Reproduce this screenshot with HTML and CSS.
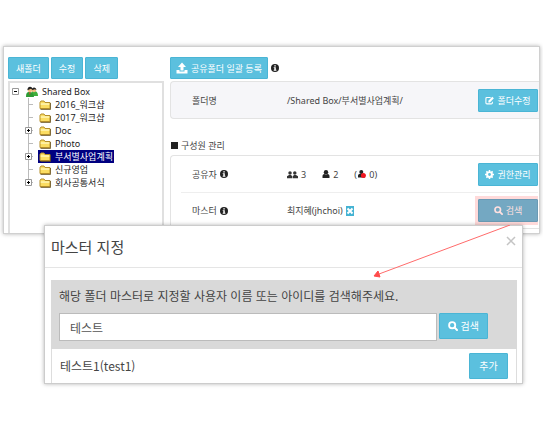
FILE: index.html
```html
<!DOCTYPE html>
<html lang="ko">
<head>
    <meta charset="utf-8">
    <title>Shared Box</title>
    <link rel="stylesheet" href="styles.css">
</head>
<body>
    <!-- Icons -->
    <svg class="defs" width="0" height="0" aria-hidden="true">
        <symbol id="folder" viewBox="0 0 12 12">
            <path d="M1 9.500V3.500L2 2h3l1 1.500h5v6z" fill="#fbdd62" stroke="#b48e2a"/>
            <path d="M1.700 4.300h8.600v1.500H1.700z" fill="#fff6b5"/>
            <path d="M1.500 10.500h10V4" fill="none" stroke="#6b5420" stroke-width=".8"/>
        </symbol>
        <symbol id="people" viewBox="0 0 12 12">
            <path d="M5 10c0-4 1-5 3-5s4 1 4 5z" fill="#3fae3a"/>
            <circle cx="8" cy="4.200" r="2" fill="#f2bd80"/>
            <path d="M5.700 4.200c0-3.600 4.700-3.600 4.700 0L9 3.200z" fill="#222"/>
            <path d="M0 11c0-4 1-5 3.500-5S8 8 8 11z" fill="#2d9b33"/>
            <path d="M3 6.500h1.600l-.8 2.500z" fill="#e33"/>
            <circle cx="4" cy="4" r="2.300" fill="#f2bd80"/>
            <path d="M1.400 4.300c0-4.600 5.300-4.600 5.300 0L5 2.800z" fill="#222"/>
        </symbol>
        <symbol id="plus" viewBox="0 0 7 7">
            <path d="M.5 .5h6v6h-6z" fill="#fff" stroke="#999"/>
            <path d="M2 3.500h3M3.500 2v3" stroke="#000"/>
        </symbol>
        <symbol id="minus" viewBox="0 0 7 7">
            <path d="M.5 .5h6v6h-6z" fill="#fff" stroke="#999"/>
            <path d="M2 3.500h3" stroke="#000"/>
        </symbol>
        <symbol id="upload" viewBox="0 0 12 12">
            <path d="M6 .5 10 5H7.500v3.500h-3V5H2zM.5 8h3v1.500h5V8h3v3.500H.5z" fill="currentColor"/>
        </symbol>
        <symbol id="info" viewBox="0 0 8 8">
            <circle cx="4" cy="4" r="4" fill="#222"/>
            <path d="M3.300 1.200h1.500v1.300H3.300zM2.700 3.200h2.100v2.600h.6v.9H2.700v-.9h.6V4.100h-.6z" fill="#fff"/>
        </symbol>
        <symbol id="edit" viewBox="0 0 12 12">
            <path d="M7.500 2H2.500Q1.200 2 1.200 3.300v6Q1.200 10.500 2.500 10.500h6q1.300 0 1.300-1.200V7.500" fill="none" stroke="currentColor" stroke-width="1.400"/>
            <path d="M4.500 8.500V6.300L9.700 1l2.100 2.100-5.200 5.400z" fill="currentColor"/>
        </symbol>
        <symbol id="gear" viewBox="0 0 12 12">
            <circle cx="6" cy="6" r="3.200" fill="none" stroke="currentColor" stroke-width="2.600"/>
            <path d="M6 0v3M6 9v3M0 6h3M9 6h3M1.800 1.800l2 2M8.200 8.200l2 2M1.800 10.200l2-2M8.200 3.800l2-2" stroke="currentColor" stroke-width="2"/>
        </symbol>
        <symbol id="search" viewBox="0 0 12 12">
            <circle cx="5" cy="5" r="3.700" fill="none" stroke="currentColor" stroke-width="2.200"/>
            <path d="M7.700 7.700 10.800 10.800" stroke="currentColor" stroke-width="2.400" stroke-linecap="round"/>
        </symbol>
        <symbol id="group" viewBox="0 0 12 9">
            <circle cx="3.300" cy="2.800" r="1.900" fill="#333"/>
            <circle cx="8.500" cy="2.800" r="1.900" fill="#333"/>
            <path d="M0 8.500V6.500L2.200 5h2.200L5.700 6.500v2zM6.300 8.500v-2L7.600 5h2.200L12 6.500v2z" fill="#333"/>
        </symbol>
        <symbol id="user" viewBox="0 0 8 8">
            <circle cx="4" cy="2.200" r="2.200" fill="#222"/>
            <path d="M.5 8V5.800Q.7 4.300 2.400 4q1.600 1 3.200 0 1.700.3 1.900 1.800V8z" fill="#222"/>
        </symbol>
        <symbol id="blocked" viewBox="0 0 8 8">
            <circle cx="3.300" cy="2" r="2" fill="#222"/>
            <path d="M0 7.500V5.500Q.2 4 2 3.800h3L7 5.500v2z" fill="#222"/>
            <circle cx="5.400" cy="5.500" r="2.500" fill="#f0141e"/>
        </symbol>
    </svg>

    <div class="scene">
        <div class="panel">
            <div class="side">
                <div class="toolbar">
                    <button class="btn">새폴더</button>
                    <button class="btn">수정</button>
                    <button class="btn">삭제</button>
                </div>
                <div class="tree">
                    <div class="root">
                        <svg class="toggle"><use href="#minus"/></svg>
                        <svg class="icon"><use href="#people"/></svg>
                        <span>Shared Box</span>
                    </div>
                    <ul class="nodes">
                        <li class="node"><i class="toggle"></i><svg class="icon"><use href="#folder"/></svg><span>2016_워크샵</span></li>
                        <li class="node"><i class="toggle"></i><svg class="icon"><use href="#folder"/></svg><span>2017_워크샵</span></li>
                        <li class="node"><svg class="toggle"><use href="#plus"/></svg><svg class="icon"><use href="#folder"/></svg><span>Doc</span></li>
                        <li class="node"><i class="toggle"></i><svg class="icon"><use href="#folder"/></svg><span>Photo</span></li>
                        <li class="node"><svg class="toggle"><use href="#plus"/></svg><div class="selected"><svg class="icon"><use href="#folder"/></svg><span>부서별사업계획</span></div></li>
                        <li class="node"><i class="toggle"></i><svg class="icon"><use href="#folder"/></svg><span>신규영업</span></li>
                        <li class="node"><svg class="toggle"><use href="#plus"/></svg><svg class="icon"><use href="#folder"/></svg><span>회사공통서식</span></li>
                    </ul>
                </div>
            </div>

            <div class="content">
                <div class="toolbar upload">
                    <button class="btn"><svg class="icon"><use href="#upload"/></svg>공유폴더 일괄 등록</button>
                    <svg class="info"><use href="#info"/></svg>
                </div>
                <div class="card gray">
                    <div class="row">
                        <div class="name">폴더명</div>
                        <div class="value">/Shared Box/부서별사업계획/</div>
                        <button class="btn wide"><svg class="small"><use href="#edit"/></svg>폴더수정</button>
                    </div>
                </div>
                <div class="heading"><i class="square"></i>구성원 관리</div>
                <div class="card">
                    <div class="row">
                        <div class="name">공유자 <svg class="info"><use href="#info"/></svg></div>
                        <div class="value counts">
                            <span class="count"><svg class="group"><use href="#group"/></svg>3</span>
                            <span class="count"><svg class="info"><use href="#user"/></svg>2</span>
                            <span class="count">(<svg class="info"><use href="#blocked"/></svg>&nbsp;0)</span>
                        </div>
                        <button class="btn wide"><svg class="small"><use href="#gear"/></svg>권한관리</button>
                    </div>
                    <div class="row">
                        <div class="name">마스터 <svg class="info"><use href="#info"/></svg></div>
                        <div class="value">최지혜(jhchoi)
                            <button class="remove" aria-label="삭제"><svg viewBox="0 0 8 8"><path d="M1.500 1.500l5 5M6.500 1.500l-5 5" stroke="#fff" stroke-width="2"/></svg></button>
                        </div>
                        <div class="mark"><button class="btn wide"><svg class="small"><use href="#search"/></svg>검색</button></div>
                    </div>
                </div>
            </div>
        </div>

        <div class="modal">
            <div class="modal-head">
                <div class="title">마스터 지정</div>
                <button class="close" aria-label="닫기"><svg viewBox="0 0 10 10"><path d="M1 1l8 8M9 1l-8 8" stroke="#c4c4c4" stroke-width="1.500"/></svg></button>
            </div>
            <div class="modal-body">
                <div class="search">
                    <label for="keyword">해당 폴더 마스터로 지정할 사용자 이름 또는 아이디를 검색해주세요.</label>
                    <div class="search-row">
                        <input type="text" id="keyword" value="테스트">
                        <button class="btn large"><svg class="icon"><use href="#search"/></svg>검색</button>
                    </div>
                </div>
                <div class="result">
                    <span>테스트1(test1)</span>
                    <button class="btn large add">추가</button>
                </div>
            </div>
        </div>

        <svg class="arrow" viewBox="0 0 138 54">
            <path d="M137 0 6 49" stroke="#ff6b6b"/>
            <path d="M1 51 5 46 7 52z" fill="#ff4b4b" stroke="#ff4b4b"/>
        </svg>
    </div>
</body>
</html>
```

FILE: styles.css
```css
* {
    box-sizing: border-box;
}
body {
    min-height: 100vh;
    margin: 0;
    padding: 46px 3px;
    background: #fff;
    color: #444;
    font-family: "Noto Sans", "Noto Sans CJK KR", sans-serif;
    font-size: 9px;
    line-height: 13px;
}
.defs {
    position: absolute;
}
svg {
    display: block;
    flex: none;
}
.scene {
    position: relative;
}

/* Buttons */
.btn {
    display: flex;
    align-items: center;
    justify-content: center;
    gap: 3px;
    height: 22px;
    padding: 0 7px;
    border: 1px solid #4ab5d5;
    border-radius: 1px;
    background: #5bc0de;
    color: #fff;
    font: inherit;
    white-space: nowrap;
}
.wide {
    width: 60px;
    height: 23px;
    padding: 0;
}
.large {
    height: 26px;
    padding: 0 8px;
    font-size: 10px;
}
.large .icon {
    width: 10px;
    height: 10px;
}
.add {
    width: 39px;
}
.icon {
    width: 12px;
    height: 12px;
}
.small {
    width: 9px;
    height: 9px;
}
.info {
    width: 8px;
    height: 8px;
}
.group {
    width: 11px;
    height: 9px;
}

/* Folder panel */
.panel {
    display: flex;
    gap: 6px;
    padding: 10px 1px 4px 4px;
    border: 1px solid #d0d0d0;
    box-shadow: 0 0 4px rgba(0, 0, 0, 0.3);
    overflow: hidden;
}
.side {
    display: flex;
    flex-direction: column;
    gap: 2px;
    width: 156px;
    margin-bottom: -4px;
}
.toolbar {
    display: flex;
    gap: 2px;
}
.tree {
    flex: 1;
    padding: 2px;
    border: 2px solid #e0e0e0;
    border-bottom: 0;
    color: #222;
}
.root, .node, .selected {
    display: flex;
    align-items: center;
}
.root {
    gap: 4px;
    height: 13px;
}
.root .icon {
    margin-left: 3px;
}
.nodes {
    margin: 0 0 0 16px;
    padding: 0;
    list-style: none;
    background: linear-gradient(#bbb, #bbb) no-repeat 0 0 / 1px 84px;
}
.node {
    height: 13px;
    background: linear-gradient(#bbb, #bbb) no-repeat 0 6px / 5px 1px;
}
.toggle {
    width: 7px;
    height: 7px;
}
.node .toggle {
    margin: 0 6px 0 -3px;
}
.node .icon {
    margin: 0 4px 0 1px;
}
.selected {
    height: 13px;
    padding-right: 1px;
    background: #000080;
    color: #fff;
}

/* Folder details */
.content {
    flex: 1;
    min-width: 0;
}
.upload {
    align-items: center;
    gap: 3px;
    margin-bottom: 2px;
}
.upload .btn {
    padding: 0 5px;
}
.card {
    margin-right: -1px;
    padding: 0 1px 0 10px;
    border: 1px solid #e3e3e3;
    border-right: 0;
    border-radius: 4px 0 0 4px;
}
.gray {
    background: #f6f6f9;
}
.row {
    display: flex;
    align-items: center;
    height: 36px;
    padding-left: 11px;
}
.row + .row {
    border-top: 1px solid #eee;
}
.name {
    display: flex;
    align-items: center;
    gap: 3px;
    width: 95px;
}
.value {
    display: flex;
    align-items: center;
    gap: 3px;
    flex: 1;
}
.counts {
    gap: 16px;
}
.count {
    display: flex;
    align-items: center;
    gap: 3px;
}
.count:last-child {
    gap: 1px;
}
.heading {
    display: flex;
    align-items: center;
    gap: 3px;
    padding: 20px 0 3px 1px;
}
.square {
    width: 7px;
    height: 7px;
    background: #222;
}
.remove {
    width: 8px;
    height: 10px;
    padding: 0;
    border: 0;
    background: #45b3d3;
}
.mark {
    padding: 3px 0 3px 3px;
    background: #ffdada;
}
.mark .btn {
    border-color: #6a9ab4;
    background: #74a8c2;
    color: #ffe0e0;
}

/* Search dialog */
.modal {
    position: absolute;
    top: 179px;
    left: 41px;
    right: 17px;
    border: 1px solid #ccc;
    background: #fff;
    box-shadow: 0 0 4px rgba(0, 0, 0, 0.3);
    color: #444;
    font-family: "Noto Sans CJK KR", "Noto Sans", sans-serif;
    font-size: 12px;
    line-height: 16px;
}
.modal-head {
    display: flex;
    align-items: center;
    justify-content: space-between;
    height: 42px;
    padding: 0 6px;
    border-bottom: 1px solid #e5e5e5;
}
.title {
    font-size: 15px;
}
.close {
    align-self: flex-start;
    width: 10px;
    margin-top: 10px;
    padding: 0;
    border: 0;
    background: none;
}
.modal-body {
    padding: 12px 5px 0 6px;
}
.search {
    padding: 8px;
    background: #d9d9d9;
}
.search label {
    display: block;
    margin-bottom: 9px;
}
.search-row {
    display: flex;
    gap: 2px;
    padding-right: 21px;
}
.search input {
    flex: 1;
    min-width: 0;
    height: 28px;
    padding: 0 10px;
    border: 1px solid #bbb;
    color: #555;
    font: inherit;
}
.result {
    display: flex;
    align-items: center;
    justify-content: space-between;
    padding: 4px 8px;
    border: 1px solid #ddd;
    border-width: 0 1px;
}

.arrow {
    position: absolute;
    top: 179px;
    right: 29px;
    width: 138px;
    height: 54px;
}
```
